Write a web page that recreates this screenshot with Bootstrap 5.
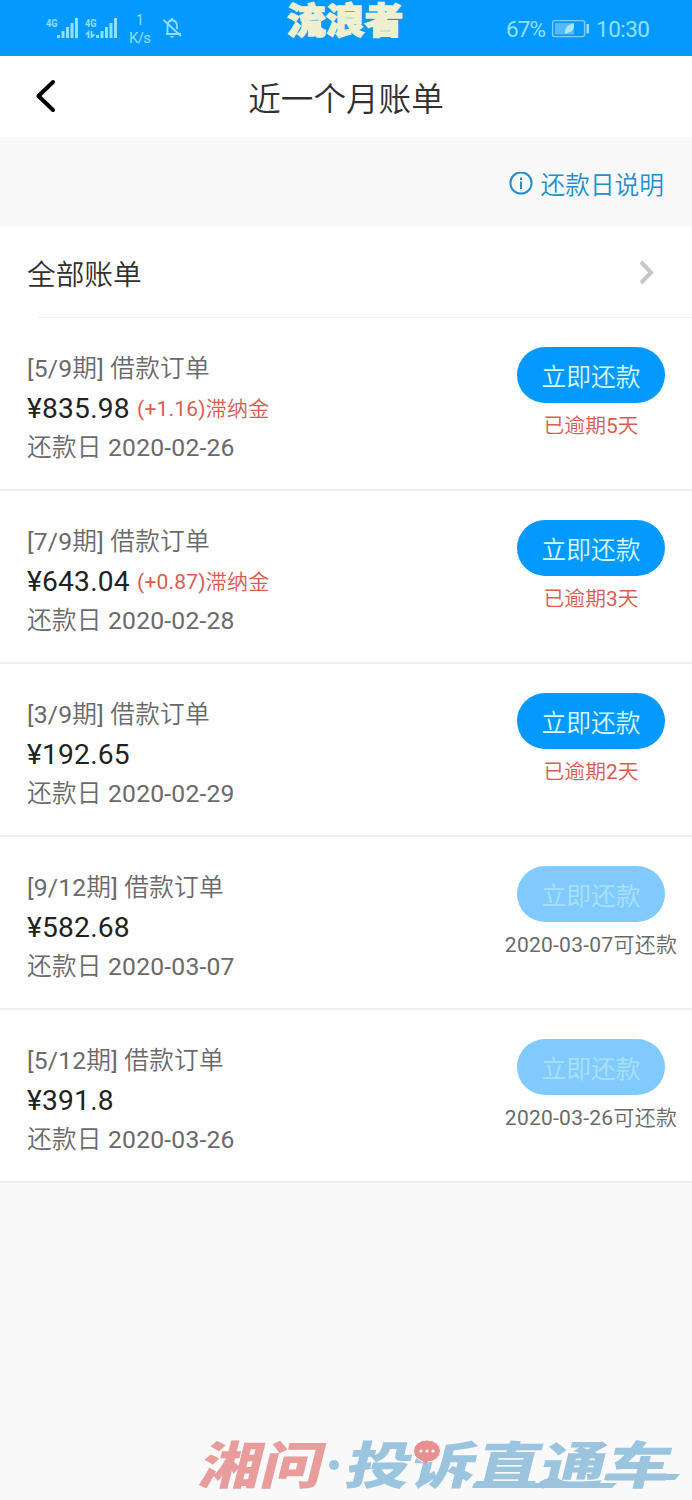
<!DOCTYPE html>
<html lang="zh-CN">
<head>
<meta charset="utf-8">
<meta name="viewport" content="width=device-width, initial-scale=1">
<title>近一个月账单</title>
<link href="https://cdn.jsdelivr.net/npm/bootstrap@5.3.0/dist/css/bootstrap.min.css" rel="stylesheet">
<style>
body{font-family:Roboto,"Noto Sans CJK SC",sans-serif;background:#f9f9f9;color:#303030;min-height:1500px}
.zh{font-family:"Noto Sans CJK SC",sans-serif;font-weight:350}
.status{height:56px;background:#0399ff;color:#8fe0fb;border-bottom:1px solid #2b8fd6}
.status svg{display:block}
.stamp{left:287px;top:0;font:900 38.8px/40px "Noto Sans CJK SC",sans-serif;color:#f0efcf;-webkit-text-stroke:1.5px #f0efcf;white-space:nowrap;transform:scaleY(.93);transform-origin:top}
.topbar{height:81px}
.topbar h1{font-size:32.6px;line-height:48px;font-weight:350}
.notice{height:90px;color:#2090cd;font-size:24.7px;padding-top:3px}
.all-row{height:90px;font-size:28.7px;padding-left:27px;padding-top:2px}
.rule{height:1px;margin-left:38px;background:#f1f1f1}
.bill{height:173px;border-bottom:2px solid #f0f0f0;padding:30px 15px 0 27px;color:#6a6a6a}
.bill-title,.bill-date{font-size:24.7px;letter-spacing:.2px}
.bill-title{height:38px;line-height:36px}
.bill-sum{height:38px;line-height:45px;color:#222;font-size:28.2px;letter-spacing:.2px}
.bill-date{height:36px;line-height:43px}
.late{color:#d95c50;font-size:21px}
.bill-sum .late{position:relative;top:-2px}
.act{width:172px;margin-top:-1px}
.pay{width:148px;height:56px;border-radius:28px;background:#0399ff;color:#d6fbff;font-size:24.8px;line-height:56px;padding:0;border:0}
.pay:disabled{background:#80caff;color:#abe0fd;opacity:1}
.cap{font-size:20.8px;line-height:30px;margin-top:6px;white-space:nowrap}
.cap-date{font-size:21px;letter-spacing:.25px}
.foot{height:318px}
</style>
</head>
<body>
<header class="status position-relative d-flex align-items-center">
<svg width="692" height="55" viewBox="0 0 692 55" fill="#8fe0fb" font-family="Roboto,sans-serif">
<g font-size="11.5" font-weight="700"><text x="46" y="27" textLength="11.5" lengthAdjust="spacingAndGlyphs">4G</text><text x="85" y="27" textLength="11.5" lengthAdjust="spacingAndGlyphs">4G</text></g>
<path d="M57 35h3v3h-3zM61.5 31h3v7h-3zM66 27h3v11h-3zM70.500 23h3v15h-3zM75 18h3v20h-3zM96 35h3v3h-3zM100.500 31h3v7h-3zM105 27h3v11h-3zM109.500 23h3v15h-3zM114 18h3v20h-3z"/>
<path d="M88.500 38v-6l-2.500 2.500M91.500 31v6l3-2.500" fill="none" stroke="#8fe0fb" stroke-width="1.7"/>
<text x="136" y="25" font-size="14">1</text><text x="129" y="42.500" font-size="15" textLength="22">K/s</text>
<path d="M166 34h15M167.500 33.500V26q0-5 4.500-6M172 20v-2M172 20q5 1 5 6v3M163.500 20l17.500 16" fill="none" stroke="#8fe0fb" stroke-width="1.8"/><path d="M169.500 36h5l-2.500 2z"/>
<text x="506" y="37" font-size="22.500" textLength="40">67%</text>
<rect x="552.600" y="20.600" width="32" height="16" rx="2" fill="none" stroke="#7bcff5" stroke-width="1.400"/>
<path d="M555 23h19v11.500h-19z" fill="#55b9fb"/><rect x="586.500" y="24" width="2.500" height="9.500"/>
<path d="M565 34q-2-8 9-11q1 9-7 10z" fill="#a9e9f8"/>
<text x="596" y="37" font-size="22.500" textLength="54">10:30</text>
</svg>
<div class="stamp position-absolute">流浪者</div>
</header>
<nav class="topbar bg-white position-relative d-flex align-items-center justify-content-center">
<svg class="position-absolute top-0 start-0" width="80" height="81" fill="none" stroke="#000" stroke-width="4" stroke-linecap="round" stroke-linejoin="round"><path d="M53 26L38.500 40L53 54"/></svg>
<h1 class="mb-0 zh">近一个月账单</h1>
</nav>
<section class="notice zh d-flex justify-content-end align-items-center">
<svg class="me-2" width="24" height="24" fill="none" stroke="#2090cd" stroke-width="2"><circle cx="12" cy="11" r="10.600"/><path d="M12 9.500V17M12 5.500V8"/></svg>
<span class="me-4 pe-1">还款日说明</span>
</section>
<main class="bg-white">
<div class="all-row zh d-flex justify-content-between align-items-center pe-4"><span>全部账单</span>
<svg class="me-2" width="23" height="30" fill="none" stroke="#c7c7c7" stroke-width="4"><path d="M4 4L14 14.500L4 25"/></svg></div>
<div class="rule"></div>
<article class="bill d-flex justify-content-between"><div><div class="bill-title">[5/9<span class="zh">期</span>] <span class="zh">借款订单</span></div><div class="bill-sum">¥835.98 <span class="late">(+1.16)<span class="zh">滞纳金</span></span></div><div class="bill-date"><span class="zh">还款日</span> 2020-02-26</div></div>
<div class="act d-flex flex-column align-items-center"><button class="btn pay zh">立即还款</button><div class="cap late"><span class="zh">已逾期</span>5<span class="zh">天</span></div></div></article>
<article class="bill d-flex justify-content-between"><div><div class="bill-title">[7/9<span class="zh">期</span>] <span class="zh">借款订单</span></div><div class="bill-sum">¥643.04 <span class="late">(+0.87)<span class="zh">滞纳金</span></span></div><div class="bill-date"><span class="zh">还款日</span> 2020-02-28</div></div>
<div class="act d-flex flex-column align-items-center"><button class="btn pay zh">立即还款</button><div class="cap late"><span class="zh">已逾期</span>3<span class="zh">天</span></div></div></article>
<article class="bill d-flex justify-content-between"><div><div class="bill-title">[3/9<span class="zh">期</span>] <span class="zh">借款订单</span></div><div class="bill-sum">¥192.65</div><div class="bill-date"><span class="zh">还款日</span> 2020-02-29</div></div>
<div class="act d-flex flex-column align-items-center"><button class="btn pay zh">立即还款</button><div class="cap late"><span class="zh">已逾期</span>2<span class="zh">天</span></div></div></article>
<article class="bill d-flex justify-content-between"><div><div class="bill-title">[9/12<span class="zh">期</span>] <span class="zh">借款订单</span></div><div class="bill-sum">¥582.68</div><div class="bill-date"><span class="zh">还款日</span> 2020-03-07</div></div>
<div class="act d-flex flex-column align-items-center"><button class="btn pay zh" disabled>立即还款</button><div class="cap cap-date">2020-03-07<span class="zh">可还款</span></div></div></article>
<article class="bill d-flex justify-content-between"><div><div class="bill-title">[5/12<span class="zh">期</span>] <span class="zh">借款订单</span></div><div class="bill-sum">¥391.8</div><div class="bill-date"><span class="zh">还款日</span> 2020-03-26</div></div>
<div class="act d-flex flex-column align-items-center"><button class="btn pay zh" disabled>立即还款</button><div class="cap cap-date">2020-03-26<span class="zh">可还款</span></div></div></article>
</main>
<footer class="foot d-flex align-items-end">
<svg width="692" height="80" viewBox="0 0 692 80" font-family="'Noto Sans CJK SC',sans-serif" font-weight="900">
<g transform="translate(0 63) skewX(-14) scale(1 .94)">
<text x="197" y="0" font-size="54" textLength="123" lengthAdjust="spacingAndGlyphs" fill="#e99c9c">湘问</text>
<text x="343" y="0" font-size="54" textLength="324" lengthAdjust="spacingAndGlyphs" fill="#9bc4de">投诉直通车</text></g>
<circle cx="334" cy="44" r="5" fill="#9bc4de"/>
<path d="M474 62h143l-5 5H472zM606 53h74l-5 6h-71z" fill="#9bc4de"/>
<ellipse cx="427" cy="30" rx="13.500" ry="11" fill="#e98f8f" stroke="#f9f9f9"/><path d="M422 38h8l-5 6z" fill="#e98f8f"/>
<g fill="#f9f9f9"><circle cx="421" cy="30" r="1.600"/><circle cx="427" cy="30" r="1.600"/><circle cx="433" cy="30" r="1.600"/></g>
</svg>
</footer>
<script src="https://cdn.jsdelivr.net/npm/bootstrap@5.3.0/dist/js/bootstrap.bundle.min.js"></script>
</body>
</html>
